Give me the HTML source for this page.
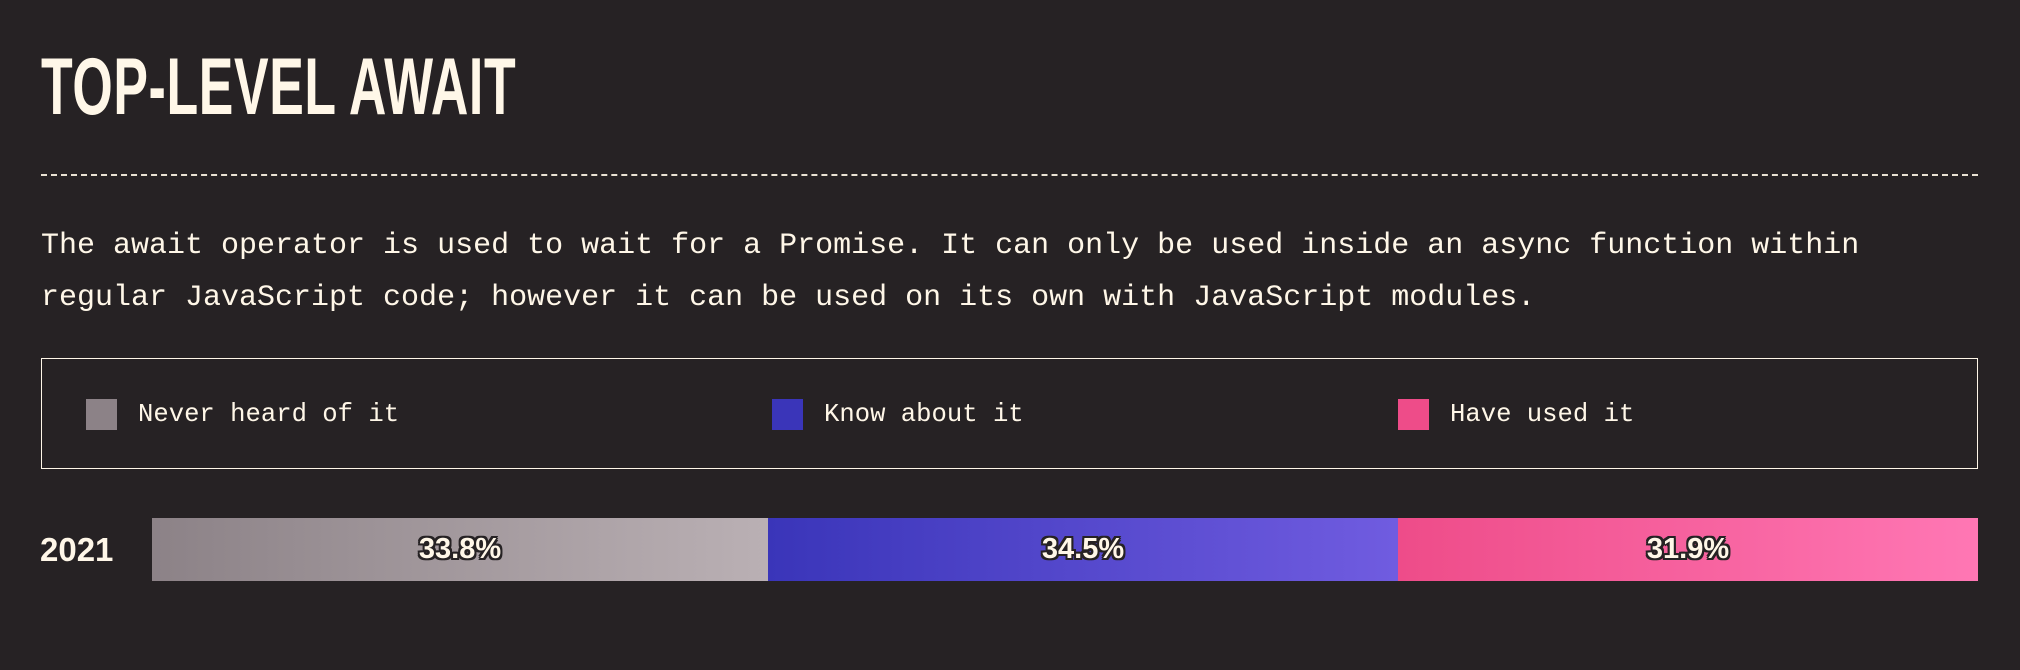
<!DOCTYPE html>
<html><head><meta charset="utf-8"><style>
body{margin:0;width:2020px;height:670px;background:#262224;color:#fff7e8;overflow:hidden;position:relative;font-family:"Liberation Mono",monospace}
.t{position:absolute;left:41px;top:45px;font-family:"Liberation Sans Narrow","Liberation Sans",sans-serif;font-weight:bold;font-size:81px;line-height:84px;transform-origin:0 0;transform:scaleX(0.64);white-space:nowrap;letter-spacing:1px}
.dash{position:absolute;left:41px;top:174px;width:1937px;border-top:2px dashed #fff7e8;opacity:.9}
.p{position:absolute;left:41px;top:221px;font-size:30px;line-height:51.5px;white-space:nowrap}
.leg{position:absolute;left:41px;top:358px;width:1935px;height:109px;border:1.5px solid #fff7e8}
.sq{position:absolute;top:40px;width:31px;height:31px}
.lt{position:absolute;top:36px;font-size:25.6px;line-height:40px;white-space:nowrap}
.yr{position:absolute;left:40px;top:532px;font-family:"Liberation Sans Narrow","Liberation Sans",sans-serif;font-weight:bold;font-size:33px;line-height:36px}
.bar{position:absolute;top:518px;height:63px;display:flex;align-items:center;justify-content:center;font-family:"Liberation Sans Narrow","Liberation Sans",sans-serif;font-weight:bold;font-size:29px;color:#fff7e8;text-shadow:-2px -2px 0 #262224,2px -2px 0 #262224,-2px 2px 0 #262224,2px 2px 0 #262224,0 2px 0 #262224,0 -2px 0 #262224,2px 0 0 #262224,-2px 0 0 #262224}
</style></head><body>
<div class="t">TOP-LEVEL AWAIT</div>
<div class="dash"></div>
<div class="p">The await operator is used to wait for a Promise. It can only be used inside an async function within<br>regular JavaScript code; however it can be used on its own with JavaScript modules.</div>
<div class="leg">
<div class="sq" style="left:44px;background:#8c8287"></div><div class="lt" style="left:96px">Never heard of it</div>
<div class="sq" style="left:730px;background:#3a35b9"></div><div class="lt" style="left:782px">Know about it</div>
<div class="sq" style="left:1356px;background:#ee4c89"></div><div class="lt" style="left:1408px">Have used it</div>
</div>
<div class="yr">2021</div>
<div class="bar" style="left:152px;width:616px;background:linear-gradient(90deg,#8c8287,#bab0b4)">33.8%</div>
<div class="bar" style="left:768px;width:630px;background:linear-gradient(90deg,#3a35b9,#705ce0)">34.5%</div>
<div class="bar" style="left:1398px;width:580px;background:linear-gradient(90deg,#ee4c89,#ff77b4)">31.9%</div>
</body></html>
